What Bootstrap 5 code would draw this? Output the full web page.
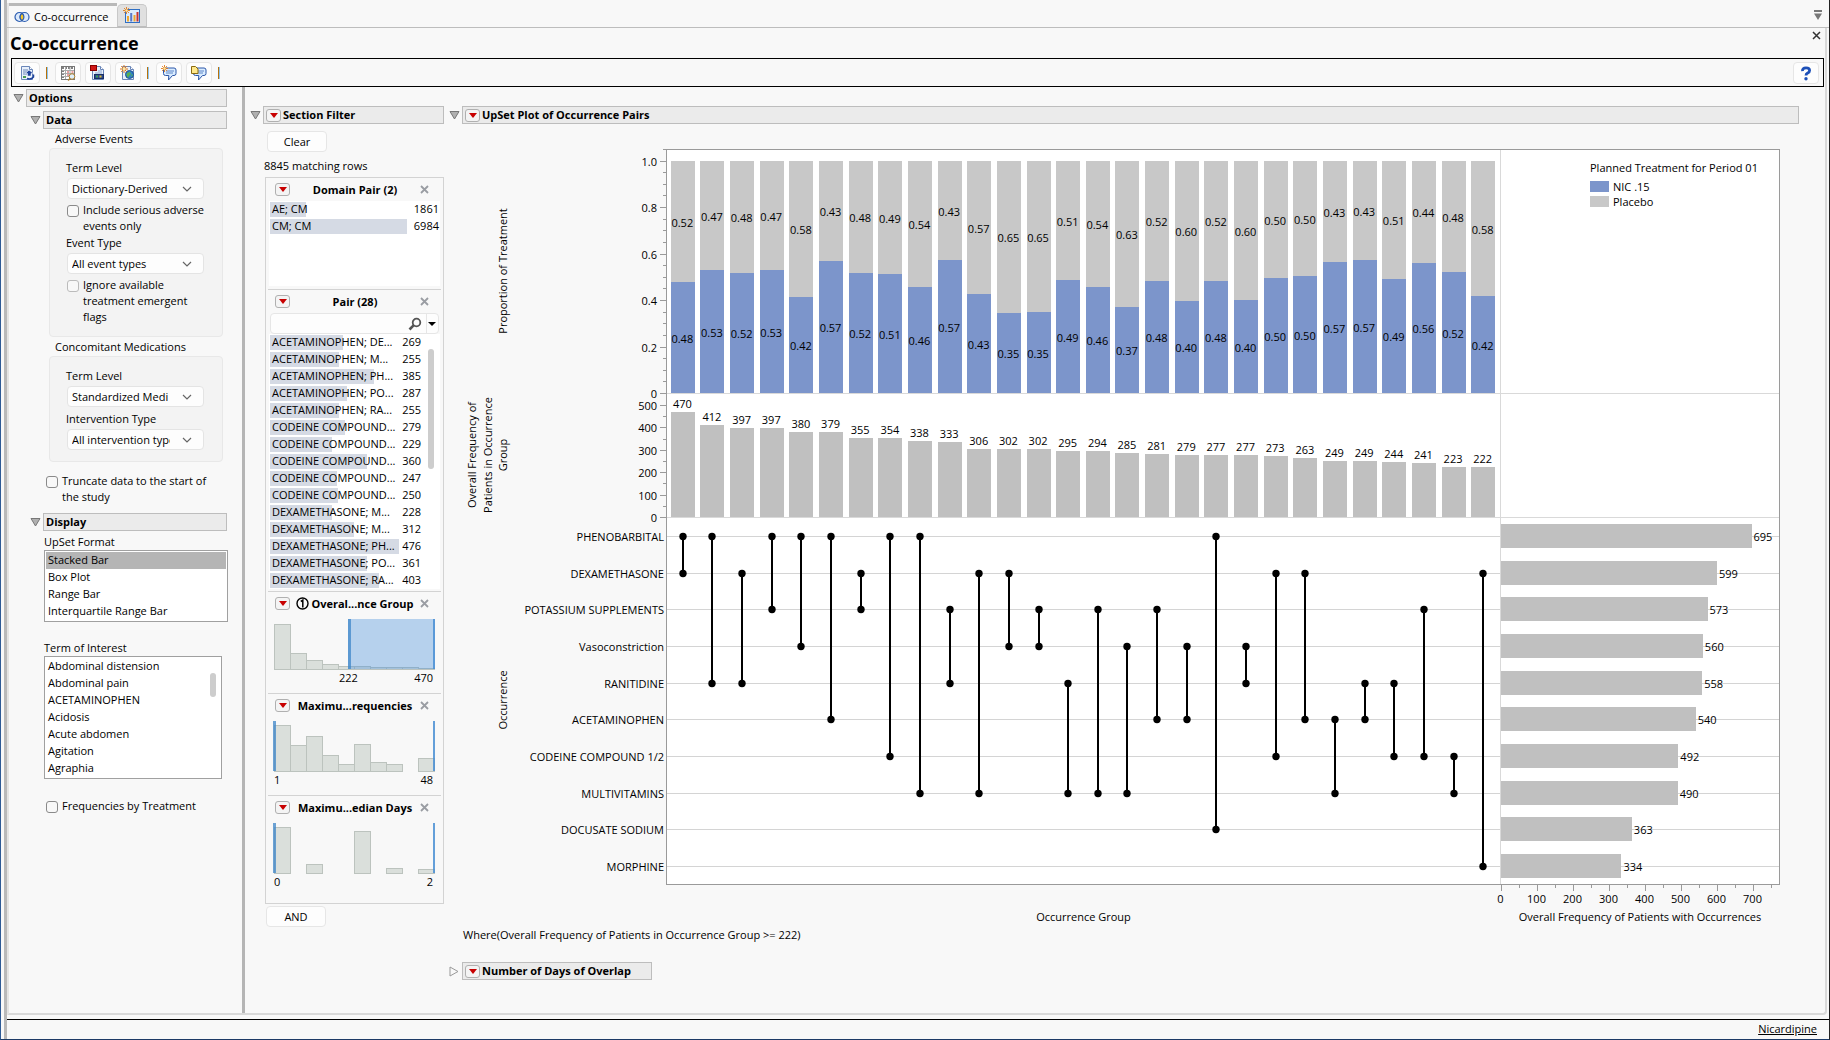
<!DOCTYPE html>
<html lang="en">
<head>
<meta charset="utf-8">
<meta name="viewport" content="width=device-width, initial-scale=1">
<title>Co-occurrence</title>
<link href="https://cdn.jsdelivr.net/npm/bootstrap@5.3.0/dist/css/bootstrap.min.css" rel="stylesheet">
<style>
:root{--face:"Open Sans","Noto Sans",sans-serif;--bg:#f8f8f8;--edge:#bdbdbd}
body{background:var(--bg);color:#000;font-family:var(--face);font-size:11px;line-height:16px;min-height:100vh;border-left:1px solid #2d5a96;border-right:1px solid #222;border-bottom:1px solid #1d3a66}
.frame{margin-left:3px;border-left:3px solid #b9b9b9;min-height:0;padding-top:3px}
.tabs{height:24px;padding-right:6px;border-left:2px solid #e4e4e4}
.tab-a{height:24px;width:108px;border:0;border-top:3px solid #b9b9b9;background:var(--bg);padding:0 5px;gap:4px;color:#000}
.tab-b{height:23px;width:30px;border:1px solid #c8c8c8;border-bottom-color:var(--edge);background:#e0e0e0;border-radius:5px 5px 0 0;padding:0}
.rule{border-bottom:1px solid var(--edge)}
.sheet{border-left:2px solid #e4e4e4;border-right:2px solid #d9d9d9;border-bottom:2px solid #d9d9d9;border-radius:0 0 4px 0;margin-right:2px}
.sheet h1{font-size:18px;line-height:22px;font-weight:700;margin:4px 0 4px 1px}
.tools{border:1px solid #000;height:29px;margin:0 1px 0 2px;padding:0 4px 0 2px;gap:4px}
.tbtn{width:26px;height:22px;border:1px solid #e6e6e6;border-radius:4px;background:#fdfdfd;padding:0}
.vsep{width:2px;height:12px;border-left:1px solid #b8720a;border-right:1px solid #8cc4f0;margin:0 3px 0 2px}
.hd{height:18px;border:1px solid var(--edge);background:#ebebeb;font-weight:700;font-size:11px;line-height:16px;margin:0;padding:0 2px}
.hgap{gap:2px}
.tri{width:11px;height:9px;padding:0;border:0;background:none;display:flex}
.pane-l{width:236px;border-right:3px solid #b5b5b5;padding:2px 15px 0 4px}
.in1{margin-left:17px}
.grp{padding:2px 0 0 42px}
.box{border:1px solid #e8e8e8;border-radius:4px;background:#f3f3f3;margin:1px 4px 0 36px;padding:11px 18px 11px 17px}
.box .lb{margin-left:-1px}
.lb{display:block}
.box .ck{margin-top:3px}
.box .ck + .lb{margin-top:1px}
.form-select.dd{height:21px;width:137px;border:1px solid #e4e4e4;border-radius:4px;background-color:#fdfdfd;background-image:url("data:image/svg+xml,%3Csvg xmlns='http://www.w3.org/2000/svg' viewBox='0 0 10 6'%3E%3Cpath d='M1 1l4 4 4-4' fill='none' stroke='%23666' stroke-width='1.2'/%3E%3C/svg%3E");background-size:10px 6px;background-position:right 11px center;font-size:11px;line-height:16px;padding:1px 33px 1px 4px;color:#000;margin-top:2px}
.ck{gap:4px;align-items:flex-start}
.form-check-input.cb{width:12px;height:12px;border:1px solid #8a8a8a;border-radius:3px;background-color:#f8f8f8;margin:3px 0 0;flex:none}
.form-check-input.cb:disabled{border-color:#bbb;opacity:1}
.form-check-input.cb:disabled~label{opacity:1}
.trunc{margin:11px 14px 0 33px}
.disp{margin:3px 0 0 31px}
.toi{margin-top:18px}
.freq{margin:19px 0 0 33px}
.lst{display:block;border:1px solid #a0a0a0;background:#fff;padding:1px;overflow:hidden;font-size:11px;color:#000;outline:0;border-radius:0;width:184px}
.lst2{width:178px}
.lst option{height:17px;min-height:17px;line-height:16px;padding:0 2px}
.lst option:checked{background:#b5b5b5 linear-gradient(#b5b5b5,#b5b5b5);color:#000}
.thumb{position:absolute;border-radius:3px;background:#cdcdcd;width:6px}
.t1{left:166px;top:17px;height:24px}
.t2{left:159px;top:15px;height:120px}
.pane-m{width:200px;padding:19px 1px 0 5px}
.hm,.hr{margin-left:2px}
.push{display:block;height:21px;width:60px;border:1px solid #e6e6e6;border-radius:4px;background:#fdfdfd;padding:0;font-size:11px;line-height:16px;color:#000}
.clr{margin:7px 0 0 17px}
.and{margin:2px 0 0 16px}
.match{margin:6px 0 0 14px}
.filt{border:1px solid #d3d3d3;margin:3px 0 0 15px;padding:0 2px 6px}
.sec{border-top:1px solid #d3d3d3}
.sec:first-child{border-top:0}
.sh{height:23px;padding:0 12px 0 7px;font-weight:700;font-size:11px}
.rb{width:15px;height:13px;border:1px solid #b0b0b0;border-radius:3px;background:#f4f4f4;padding:0;display:flex;align-items:center;justify-content:center;flex:none}
.xx{width:9px;height:9px;border:0;background:none;padding:0;display:flex}
.vals{background:#fff;margin:0 1px;padding:0 1px}
.dom{height:85px;margin-bottom:3px}
.pairs{padding-right:19px;margin-bottom:2px}
.vrow{height:17px;position:relative}
.vbar{position:absolute;left:0;top:1px;height:15px;background:#d5dae4}
.vtx{position:relative;padding-left:2px}
.find{height:21px;margin:0 2px;border:1px solid #e6e6e6;border-radius:4px;background:#fdfdfd}
.find input{height:18px;border:0;background:none;min-width:0;outline:0;font-size:11px}
.find .drop{border:0;border-left:1px solid #e6e6e6;background:none;width:13px;height:19px;padding:0}
.hist{display:block;margin:4px 0 0 5px;width:162px;height:51px}
.hl{height:23px;margin:0 8px 0 6px}
.mid{margin-left:65px}
.pane-r{padding:19px 26px 0 4px;min-width:0}
.chartbox{margin-left:11px}
.chart{display:block;width:100%;height:803px;font-family:var(--face);font-size:11px}
.where{padding-left:14px}
.days{margin-top:19px}
.hdays{width:190px}
.status{border-top:1px solid #000;height:20px;margin-top:4px;padding:0 12px 2px 0}
.status a{color:#000}
</style>
<script src="https://cdn.jsdelivr.net/npm/bootstrap@5.3.0/dist/js/bootstrap.bundle.min.js"></script>
</head>
<body class="d-flex flex-column">
<svg width="0" height="0" class="position-absolute" aria-hidden="true">
  <defs>
    <symbol id="open" viewBox="0 0 11 9"><path d="M1 .5h9L5.500 8z" fill="#b0b0b0" stroke="#777"/></symbol>
    <symbol id="red" viewBox="0 0 8 5"><path d="M0 0h8L4 5z" fill="#c80000"/></symbol>
    <symbol id="ex" viewBox="0 0 9 9"><path d="M1 1l7 7M8 1l-7 7" stroke="#9a9da3" stroke-width="1.800"/></symbol>
    <symbol id="bub" viewBox="0 0 16 16"><path d="M3.500 3h9.500q2 0 2 2v3.500q0 2-2 2h-1.500L7.500 15l.3-4.500H4.500q-2 0-2-2V4.500z" fill="#d9ecff" stroke="#2c56a8"/><path d="M5 6h8M5 8h7" stroke="#5f86c8"/></symbol>
    <symbol id="star" viewBox="0 0 8 8"><path d="M4 0v8M0 4h8M1.200 1.200l5.600 5.600M6.800 1.200L1.200 6.800" stroke="#e07818"/><circle cx="4" cy="4" r="1.400" fill="#ffe9a0"/></symbol>
    <symbol id="page" viewBox="0 0 16 16"><path d="M2.500 1.500h8l3 3v10h-11z" fill="#e8f0fb" stroke="#6a86b8"/><path d="M10.500 1.500v3h3" fill="#fff" stroke="#6a86b8"/></symbol>
  </defs>
</svg>
<div class="frame flex-grow-1 d-flex flex-column">
  <div class="rule">
    <div class="tabs d-flex align-items-end" role="tablist">
      <button class="tab-a d-flex align-items-center" role="tab" aria-selected="true">
        <svg width="16" height="12" viewBox="0 0 16 12" class="flex-shrink-0"><circle cx="5.500" cy="6" r="4.500" fill="#dbe9fb" stroke="#2b5cb0" stroke-width="1.200"/><circle cx="10.500" cy="6" r="4.500" fill="#dbe9fb" stroke="#2b5cb0" stroke-width="1.200"/><path d="M8 2.300a4.500 4.500 0 0 1 0 7.400a4.500 4.500 0 0 1 0-7.400z" fill="#f6c524" stroke="#2b5cb0" stroke-width="1.200"/></svg>
        <span class="text-nowrap">Co-occurrence</span>
      </button>
      <button class="tab-b d-flex align-items-center justify-content-center" role="tab" aria-label="Report">
        <svg width="18" height="17" viewBox="0 0 18 17"><rect x="2.500" y="2.500" width="14" height="13" fill="#dcebfc" stroke="#2f6fc4"/><path d="M4 14.500V9h2v5.500zM10.500 14.500V8h2v6.500z" fill="#f0a830"/><path d="M7.200 14.500V6h2v8.500z" fill="#5a78c8"/><path d="M13.500 14.500V5h2v9.500z" fill="#c83232"/><use href="#star" x="0" y="0" width="7" height="7"/></svg>
      </button>
      <svg width="10" height="11" viewBox="0 0 10 11" class="ms-auto align-self-center"><path d="M1 0h8v2H1zM1 3.500h8L5 10z" fill="#777"/></svg>
    </div>
  </div>
  <div class="sheet flex-grow-1 d-flex flex-column">
    <div class="d-flex align-items-center justify-content-between">
      <h1>Co-occurrence</h1>
      <button class="xx me-1 mb-3" aria-label="Close"><svg width="9" height="9" viewBox="0 0 9 9"><path d="M1 1l7 7M8 1l-7 7" stroke="#333" stroke-width="1.500"/></svg></button>
    </div>
    <div class="tools d-flex align-items-center">
      <button class="tbtn" aria-label="Rerun"><svg width="16" height="16" viewBox="0 0 16 16"><use href="#page"/><path d="M4 5h5M4 7h6M4 9h4" stroke="#6a86b8"/><path d="M4 11h3v2H4z" fill="#4a9a50"/><path d="M10 5l4.500 3.500H12V11H8.500V8.500H6.500z" fill="#1d429c" stroke="#fff" stroke-width=".5"/><path d="M8 13.500q4 1.500 6.500-1.500v-2.500" fill="none" stroke="#1d429c" stroke-width="1.500"/></svg></button>
      <span class="vsep"></span>
      <button class="tbtn" aria-label="Data table"><svg width="16" height="16" viewBox="0 0 16 16"><rect x="1.500" y="1.500" width="13" height="13" fill="#fff" stroke="#777"/><path d="M2 3h12" stroke="#555" stroke-width="1.500" stroke-dasharray="2 1"/><path d="M3 5v9" stroke="#555" stroke-width="1.500" stroke-dasharray="2 1"/><path d="M5.500 2v12M10 2v12M2 5.500h12M2 8.500h12M2 11.500h12" stroke="#aaa"/><path d="M7 7h2M7 10h2M11.500 7h2" stroke="#d04040"/><circle cx="12" cy="11.500" r="2.800" fill="#dff0fb" stroke="#b08030"/><path d="M10 13.500L8 15.500" stroke="#b08030" stroke-width="1.500"/></svg></button>
      <button class="tbtn" aria-label="Save report"><svg width="16" height="16" viewBox="0 0 16 16"><use href="#page"/><path d="M8 6h4M5 8h7" stroke="#8aa4d0"/><rect x=".5" y=".5" width="6" height="5" fill="#d01818" stroke="#800"/><rect x="4.500" y="9.500" width="9" height="4" fill="#2b4a90" stroke="#1a2f66"/><path d="M6 10.500h2v2H6z" fill="#40a050"/><path d="M9.500 10.500h2v2h-2z" fill="#e8c030"/></svg></button>
      <button class="tbtn" aria-label="Publish"><svg width="16" height="16" viewBox="0 0 16 16"><use href="#page"/><circle cx="9.500" cy="9.500" r="4" fill="#2f7fc8" stroke="#1c4f94"/><path d="M7 8l3-1 1 2-2 2-1 2-1.500-3zM11.500 9l1.500 1-1.500 2z" fill="#58b050"/><use href="#star" x="0" y="0" width="8" height="8"/></svg></button>
      <span class="vsep"></span>
      <button class="tbtn" aria-label="New note"><svg width="16" height="16" viewBox="0 0 16 16"><use href="#bub"/><use href="#star" x="0" y="0" width="7" height="7"/></svg></button>
      <button class="tbtn" aria-label="Notes"><svg width="16" height="16" viewBox="0 0 16 16"><use href="#bub"/><path d="M.5 1.500h4l2.500 2.500v4.500H.5z" fill="#ffe88a" stroke="#8a6a10"/></svg></button>
      <span class="vsep"></span>
      <button class="tbtn ms-auto" aria-label="Help"><svg width="12" height="15" viewBox="0 0 12 15"><path d="M2.500 5.200Q2.200 1.800 6 1.800q3.600 0 3.600 2.700 0 1.600-1.900 2.600Q6 8 6 9.500" fill="none" stroke="#1d50b8" stroke-width="2.800"/><circle cx="6" cy="12.700" r="1.700" fill="#1d50b8"/></svg></button>
    </div>
    <div class="d-flex flex-grow-1">
      <aside class="pane-l flex-shrink-0">
        <div class="d-flex align-items-center hgap"><button class="tri" aria-label="Collapse Options"><svg width="11" height="9"><use href="#open"/></svg></button><h2 class="hd flex-grow-1">Options</h2></div>
        <div class="in1 d-flex align-items-center hgap mt-1"><button class="tri" aria-label="Collapse Data"><svg width="11" height="9"><use href="#open"/></svg></button><h3 class="hd flex-grow-1">Data</h3></div>
        <div class="grp">Adverse Events</div>
        <div class="box">
          <label class="lb" for="tl1">Term Level</label>
          <select class="form-select dd" id="tl1"><option>Dictionary-Derived</option></select>
          <div class="ck d-flex"><input class="form-check-input cb" type="checkbox" id="c1"><label for="c1">Include serious adverse events only</label></div>
          <label class="lb" for="et">Event Type</label>
          <select class="form-select dd" id="et"><option>All event types</option></select>
          <div class="ck d-flex"><input class="form-check-input cb" type="checkbox" id="c2" disabled><label for="c2">Ignore available treatment emergent flags</label></div>
        </div>
        <div class="grp">Concomitant Medications</div>
        <div class="box">
          <label class="lb" for="tl2">Term Level</label>
          <select class="form-select dd" id="tl2"><option>Standardized Medi</option></select>
          <label class="lb mt-1" for="it">Intervention Type</label>
          <select class="form-select dd" id="it"><option>All intervention types</option></select>
        </div>
        <div class="ck d-flex trunc"><input class="form-check-input cb" type="checkbox" id="c3"><label for="c3">Truncate data to the start of the study</label></div>
        <div class="in1 d-flex align-items-center hgap mt-2"><button class="tri" aria-label="Collapse Display"><svg width="11" height="9"><use href="#open"/></svg></button><h3 class="hd flex-grow-1">Display</h3></div>
        <div class="disp">
          <label class="lb" for="uf">UpSet Format</label>
          <select class="lst" id="uf" size="4"><option selected>Stacked Bar</option><option>Box Plot</option><option>Range Bar</option><option>Interquartile Range Bar</option></select>
          <label class="lb toi" for="ti">Term of Interest</label>
          <div class="position-relative"><select class="lst lst2" id="ti" size="7"><option>Abdominal distension</option><option>Abdominal pain</option><option>ACETAMINOPHEN</option><option>Acidosis</option><option>Acute abdomen</option><option>Agitation</option><option>Agraphia</option></select><span class="thumb t1"></span></div>
        </div>
        <div class="ck d-flex freq"><input class="form-check-input cb" type="checkbox" id="c4"><label for="c4">Frequencies by Treatment</label></div>
      </aside>
      <section class="pane-m flex-shrink-0">
        <div class="d-flex align-items-center"><button class="tri flex-shrink-0" aria-label="Collapse Section Filter"><svg width="11" height="9"><use href="#open"/></svg></button><h2 class="hd flex-grow-1 d-flex align-items-center hgap hm"><button class="rb" aria-label="Section Filter menu"><svg width="8" height="5"><use href="#red"/></svg></button>Section Filter</h2></div>
        <button class="push clr">Clear</button>
        <div class="match">8845 matching rows</div>
        <div class="filt">
          <div class="sec">
            <div class="sh d-flex align-items-center justify-content-between"><button class="rb" aria-label="Domain Pair menu"><svg width="8" height="5"><use href="#red"/></svg></button><span>Domain Pair (2)</span><button class="xx" aria-label="Remove Domain Pair"><svg width="9" height="9"><use href="#ex"/></svg></button></div>
            <div class="vals dom" id="dom"></div>
          </div>
          <div class="sec">
            <div class="sh d-flex align-items-center justify-content-between"><button class="rb" aria-label="Pair menu"><svg width="8" height="5"><use href="#red"/></svg></button><span>Pair (28)</span><button class="xx" aria-label="Remove Pair"><svg width="9" height="9"><use href="#ex"/></svg></button></div>
            <div class="find d-flex align-items-center"><input type="search" class="flex-grow-1" aria-label="Search pairs"><svg width="14" height="14" viewBox="0 0 14 14" class="me-1 flex-shrink-0"><circle cx="8.500" cy="5.500" r="3.800" fill="none" stroke="#555" stroke-width="1.800"/><path d="M5.800 8.200L1.500 12.500" stroke="#555" stroke-width="2.600"/></svg><button class="drop" aria-label="Search options"><svg width="8" height="4" viewBox="0 0 8 4" class="d-block mx-auto"><path d="M0 0h8L4 4z"/></svg></button></div>
            <div class="vals pairs position-relative"><div id="pairs"></div><span class="thumb t2"></span></div>
          </div>
          <div class="sec hs" data-bars="45,16,9,5,3,3,2,2,2,1" data-sel="75"><div class="sh d-flex align-items-center justify-content-between"><button class="rb" aria-label="Group menu"><svg width="8" height="5"><use href="#red"/></svg></button><span class="d-flex align-items-center hgap"><svg width="13" height="13" viewBox="0 0 13 13"><circle cx="6.500" cy="6.500" r="5.500" fill="none" stroke="#000" stroke-width="1.400"/><path d="M4.800 4.500l2-1.300v7.300" fill="none" stroke="#000" stroke-width="1.500"/></svg>Overal...nce Group</span><button class="xx" aria-label="Remove filter"><svg width="9" height="9"><use href="#ex"/></svg></button></div><svg class="hist" viewBox="0 0 162 51"></svg><div class="hl d-flex justify-content-between"><span class="mid">222</span><span>470</span></div></div>
          <div class="sec hs" data-bars="46,26,35,16,7,27,9,7,0,13" data-sel="0"><div class="sh d-flex align-items-center justify-content-between"><button class="rb" aria-label="Frequencies menu"><svg width="8" height="5"><use href="#red"/></svg></button><span>Maximu...requencies</span><button class="xx" aria-label="Remove filter"><svg width="9" height="9"><use href="#ex"/></svg></button></div><svg class="hist" viewBox="0 0 162 51"></svg><div class="hl d-flex justify-content-between"><span>1</span><span>48</span></div></div>
          <div class="sec hs" data-bars="46,0,9,0,0,42,0,5,0,4" data-sel="0"><div class="sh d-flex align-items-center justify-content-between"><button class="rb" aria-label="Days menu"><svg width="8" height="5"><use href="#red"/></svg></button><span>Maximu...edian Days</span><button class="xx" aria-label="Remove filter"><svg width="9" height="9"><use href="#ex"/></svg></button></div><svg class="hist" viewBox="0 0 162 51"></svg><div class="hl d-flex justify-content-between"><span>0</span><span>2</span></div></div>
        </div>
        <button class="push and">AND</button>
      </section>
      <main class="pane-r flex-grow-1">
        <div class="d-flex align-items-center"><button class="tri flex-shrink-0" aria-label="Collapse plot"><svg width="11" height="9"><use href="#open"/></svg></button><h2 class="hd flex-grow-1 d-flex align-items-center hgap hr"><button class="rb" aria-label="Plot menu"><svg width="8" height="5"><use href="#red"/></svg></button>UpSet Plot of Occurrence Pairs</h2></div>
        <div class="chartbox"><svg class="chart" id="chart" role="img" aria-label="UpSet plot of occurrence pairs"></svg></div>
        <div class="where">Where(Overall Frequency of Patients in Occurrence Group &gt;= 222)</div>
        <div class="d-flex align-items-center days"><button class="tri flex-shrink-0 align-items-center" aria-label="Expand Number of Days of Overlap"><svg width="10" height="11" viewBox="0 0 10 11" class="flex-shrink-0"><path d="M1 1l8 4.500L1 10z" fill="none" stroke="#999"/></svg></button><h2 class="hd d-flex align-items-center hgap hr hdays"><button class="rb" aria-label="Days of Overlap menu"><svg width="8" height="5"><use href="#red"/></svg></button>Number of Days of Overlap</h2></div>
      </main>
    </div>
  </div>
  <footer class="status d-flex justify-content-end align-items-center"><a href="#">Nicardipine</a></footer>
</div>
<script>
const NS = 'http://www.w3.org/2000/svg';
function add(parent, tag, attrs, text) {
  const e = document.createElementNS(NS, tag);
  for (const k in attrs) e.setAttribute(k, attrs[k]);
  if (text !== undefined) e.textContent = text;
  parent.appendChild(e);
  return e;
}

// Value lists in the filter panel
function rows(id, data, scale) {
  document.getElementById(id).innerHTML = data.map(([n, v]) =>
    `<div class="vrow"><span class="vbar" style="width:${Math.round(v * scale)}px"></span><div class="vtx d-flex justify-content-between text-nowrap"><span>${n}</span><span>${v}</span></div></div>`).join('');
}
rows('dom', [['AE; CM', 1861], ['CM; CM', 6984]], 0.0196);
rows('pairs', [
  ['ACETAMINOPHEN; DE...', 269], ['ACETAMINOPHEN; M...', 255], ['ACETAMINOPHEN; PH...', 385],
  ['ACETAMINOPHEN; PO...', 287], ['ACETAMINOPHEN; RA...', 255], ['CODEINE COMPOUND...', 279],
  ['CODEINE COMPOUND...', 229], ['CODEINE COMPOUND...', 360], ['CODEINE COMPOUND...', 247],
  ['CODEINE COMPOUND...', 250], ['DEXAMETHASONE; M...', 228], ['DEXAMETHASONE; M...', 312],
  ['DEXAMETHASONE; PH...', 476], ['DEXAMETHASONE; PO...', 361], ['DEXAMETHASONE; RA...', 403]], 0.27);

// Small histograms with their selected range
document.querySelectorAll('.hs').forEach(s => {
  const svg = s.querySelector('svg.hist'), sel = +s.dataset.sel;
  s.dataset.bars.split(',').map(Number).forEach((h, i) => {
    if (h) add(svg, 'rect', {x: 1.5 + 16 * i, y: 50.5 - h, width: 16, height: h, fill: '#dadfdb', stroke: '#bcc3be'});
  });
  if (sel) add(svg, 'rect', {x: sel, y: 0, width: 87, height: 50, fill: '#4a90d9', 'fill-opacity': .38});
  add(svg, 'rect', {x: sel, y: 0, width: 3, height: 50, fill: '#3d85c8', 'fill-opacity': .75});
  add(svg, 'rect', {x: 160, y: 0, width: 2, height: 50, fill: '#4a8fd4', 'fill-opacity': .85});
});

const freq = [470,412,397,397,380,379,355,354,338,333,306,302,302,295,294,285,281,279,277,277,273,263,249,249,244,241,223,222];
const prop = [.479,.527,.518,.529,.415,.568,.518,.511,.458,.572,.426,.346,.350,.488,.458,.372,.482,.396,.482,.402,.496,.504,.565,.572,.491,.560,.521,.418];
const propTxt = ['0.48','0.53','0.52','0.53','0.42','0.57','0.52','0.51','0.46','0.57','0.43','0.35','0.35','0.49','0.46','0.37','0.48','0.40','0.48','0.40','0.50','0.50','0.57','0.57','0.49','0.56','0.52','0.42'];
const restTxt = ['0.52','0.47','0.48','0.47','0.58','0.43','0.48','0.49','0.54','0.43','0.57','0.65','0.65','0.51','0.54','0.63','0.52','0.60','0.52','0.60','0.50','0.50','0.43','0.43','0.51','0.44','0.48','0.58'];
const links = [[0,1],[0,4],[1,4],[0,2],[0,3],[0,5],[1,2],[0,6],[0,7],[2,4],[1,7],[1,3],[2,3],[4,7],[2,7],[3,7],[2,5],[3,5],[0,8],[3,4],[1,6],[1,5],[5,7],[4,5],[4,6],[2,6],[6,7],[1,9]];
const terms = [['PHENOBARBITAL',695],['DEXAMETHASONE',599],['POTASSIUM SUPPLEMENTS',573],['Vasoconstriction',560],['RANITIDINE',558],['ACETAMINOPHEN',540],['CODEINE COMPOUND 1/2',492],['MULTIVITAMINS',490],['DOCUSATE SODIUM',363],['MORPHINE',334]];

function draw() {
  const svg = document.getElementById('chart');
  svg.replaceChildren();
  const W = svg.clientWidth;
  const L = 207, R = W - 19, T = 25, B = 760, Y0 = 269, Y1 = 393, M = L + Math.round((R - L) * .748);
  const line = (x1, y1, x2, y2, c, w) => add(svg, 'line', {x1, y1, x2, y2, stroke: c || '#9a9a9a', 'stroke-width': w || 1});
  const text = (x, y, t, a) => add(svg, 'text', {x, y: y + 4, 'text-anchor': a || 'middle'}, t);
  const bar = (x, y, w, h, c) => add(svg, 'rect', {x, y, width: w, height: h, fill: c, 'shape-rendering': 'crispEdges'});
  add(svg, 'rect', {x: L, y: T, width: R - L, height: B - T, fill: '#fff'});
  const step = (M - L - 3) / 28, cx = i => L + 1 + step * (i + .5), bw = step * .81;
  const rowY = r => Math.round(412 + r * 36.67) + .5;

  terms.forEach((t, r) => line(L, rowY(r), R, rowY(r), '#d4d4d4'));
  line(L, Y0 + .5, R, Y0 + .5, '#d9d9d9');
  line(L, Y1 + .5, R, Y1 + .5, '#d9d9d9');
  line(M + .5, T, M + .5, B, '#d9d9d9');

  freq.forEach((f, i) => {
    const x = Math.round(cx(i) - bw / 2), w = Math.round(bw), split = Math.round(Y0 - 232.5 * prop[i]);
    bar(x, 37, w, split - 37, '#c8c8c8');
    bar(x, split, w, Y0 - split, '#7c95cb');
    text(cx(i) - .5, (37 + split) / 2 + 1, restTxt[i]);
    text(cx(i) - .5, (split + Y0) / 2 + 1, propTxt[i]);
    const top = Math.round(Y1 - f * .2238);
    bar(x, top, w, Y1 - top, '#c0c0c0');
    text(cx(i) - .5, top - 8, f);
    const c = Math.round(cx(i)), [a, b] = links[i];
    line(c, rowY(a), c, rowY(b), '#000', 2);
    add(svg, 'circle', {cx: c, cy: rowY(a), r: 3.7});
    add(svg, 'circle', {cx: c, cy: rowY(b), r: 3.7});
  });

  const hs = (R - M - 1) / 774;
  terms.forEach(([name, v], r) => {
    bar(M + 1, rowY(r) - 12.5, Math.round(v * hs), 24, '#c0c0c0');
    text(M + 3 + v * hs, rowY(r), v, 'start');
    text(L - 3, rowY(r), name, 'end');
  });

  add(svg, 'rect', {x: L - .5, y: T + .5, width: R - L, height: B - T, fill: 'none', stroke: '#9a9a9a'});
  line(L - 4, T + .5, L, T + .5);
  for (let i = 0; i <= 20; i++) {
    const y = Math.round(Y0 - i * 11.62) + .5, major = i % 4 === 0;
    line(L - (major ? 7 : 4), y, L, y);
    if (major) text(L - 10, y, i ? (i / 20).toFixed(1) : '0', 'end');
  }
  for (let i = 0; i <= 10; i++) {
    const y = Math.round(Y1 - i * 11.19) + .5, major = i % 2 === 0;
    line(L - (major ? 7 : 4), y, L, y);
    if (major) text(L - 10, y, i * 50, 'end');
  }
  for (let i = 0; i <= 15; i++) {
    const x = Math.round(M + 1 + i * 50 * hs) + .5, major = i % 2 === 0;
    line(x, B, x, B + (major ? 7 : 4));
    if (major) text(x - 1, B + 15, i * 50);
  }
  text((L + M) / 2, 793, 'Occurrence Group');
  text((M + R) / 2, 793, 'Overall Frequency of Patients with Occurrences');
  const vert = (x, y, t) => add(svg, 'text', {transform: `translate(${x + 4} ${y}) rotate(-90)`, 'text-anchor': 'middle'}, t);
  vert(43, 147, 'Proportion of Treatment');
  vert(12, 331, 'Overall Frequency of');
  vert(28, 331, 'Patients in Occurrence');
  vert(43, 331, 'Group');
  vert(43, 576, 'Occurrence');
  text(R - 190, 44, 'Planned Treatment for Period 01', 'start');
  bar(R - 190, 57, 19, 11, '#7c95cb');
  bar(R - 190, 72, 19, 11, '#c8c8c8');
  text(R - 167, 63, 'NIC .15', 'start');
  text(R - 167, 78, 'Placebo', 'start');
}
draw();
addEventListener('resize', draw);
</script>
</body>
</html>
